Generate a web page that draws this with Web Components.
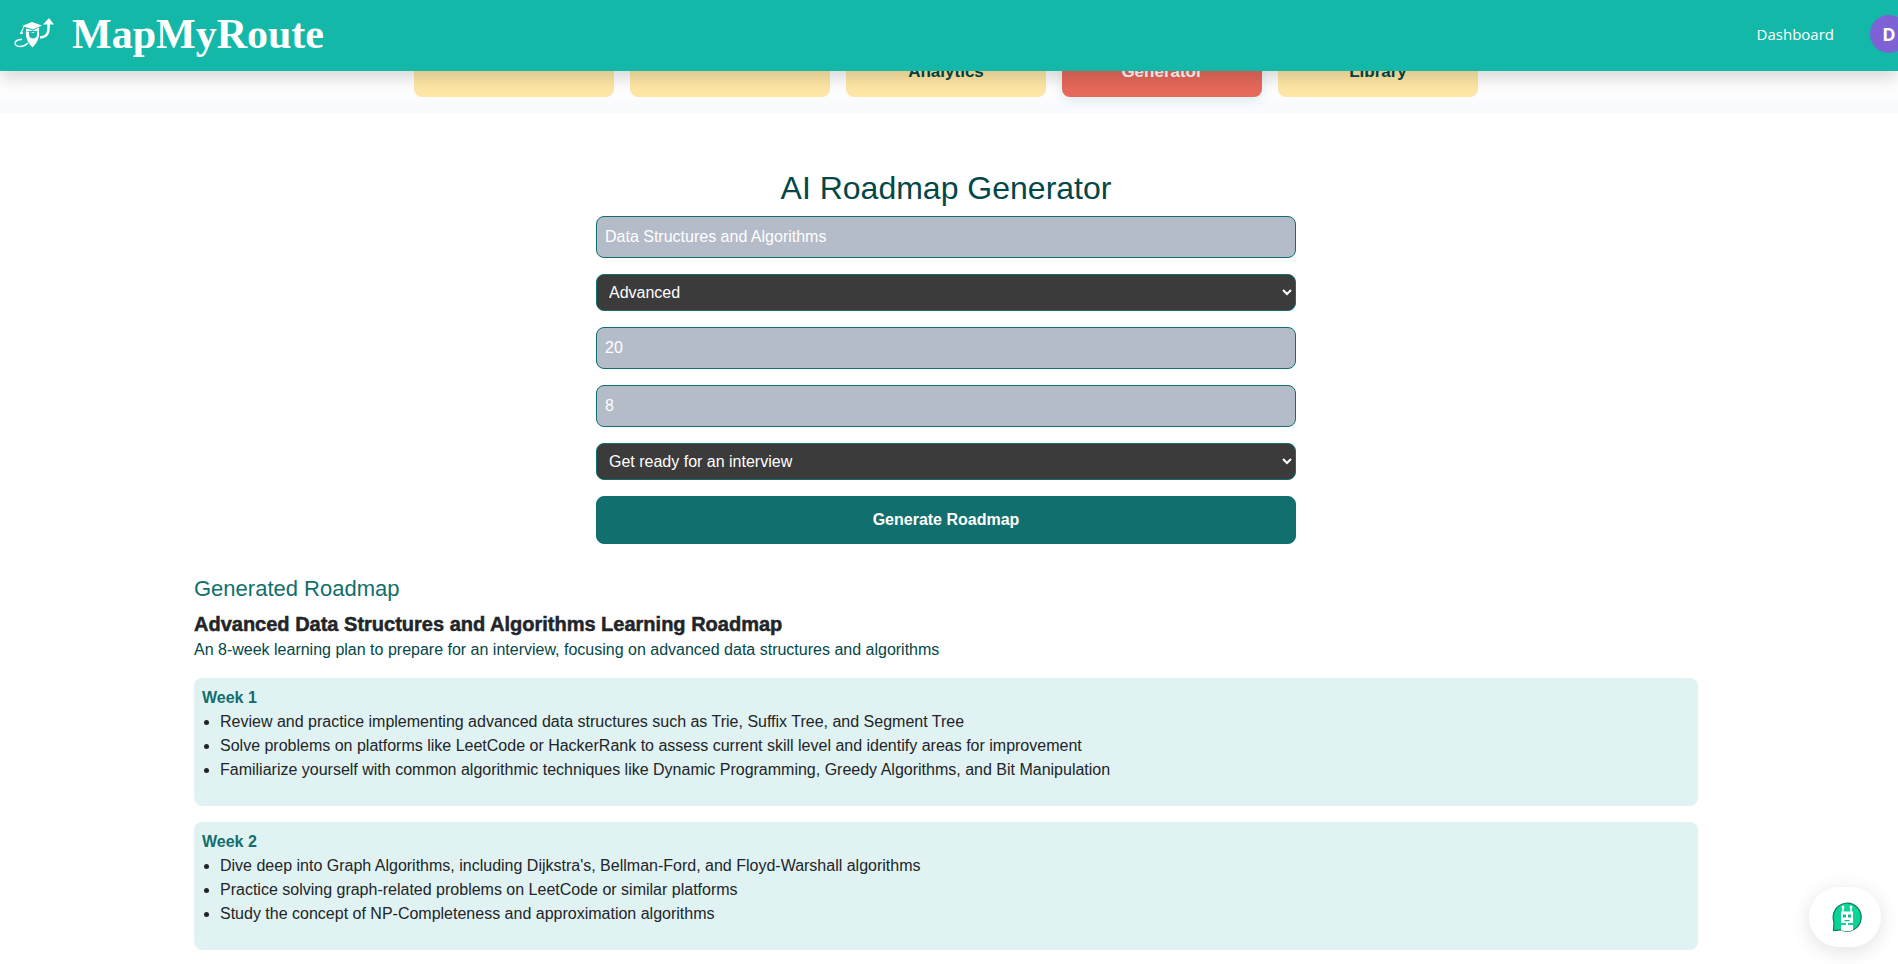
<!DOCTYPE html>
<html lang="en">
<head>
<meta charset="utf-8">
<title>MapMyRoute</title>
<style>
  body { margin: 0; background: #fff; color: #212529; font: 16px/24px "Liberation Sans", Arial, sans-serif; }
</style>
</head>
<body>
<route-app></route-app>

<template id="app">
  <style>
    :host { display: block; overflow-x: clip; }
    .content { padding-right: 6px; }
  </style>
  <site-header></site-header>
  <div class="content">
    <tab-bar>
      <tab-item></tab-item>
      <tab-item></tab-item>
      <tab-item>Analytics</tab-item>
      <tab-item active>Generator</tab-item>
      <tab-item>Library</tab-item>
    </tab-bar>
    <main>
      <roadmap-form></roadmap-form>
      <roadmap-result></roadmap-result>
    </main>
  </div>
  <chat-button></chat-button>
</template>

<template id="header">
  <style>
    :host { display: block; position: sticky; top: 0; z-index: 2; background: #14b8a8; box-shadow: 0 8px 16px rgba(0,0,0,.15); }
    header { display: flex; align-items: center; box-sizing: border-box; height: 71px; padding: 0 0 4px 12px; }
    .brand { display: flex; align-items: center; gap: 16px; color: #fff; text-decoration: none; font: bold 42px/48px "Liberation Serif", "Times New Roman", serif; }
    svg { display: block; width: 44px; height: 40px; }
    nav { display: flex; align-items: center; gap: 36px; margin-left: auto; margin-right: -10px; }
    nav a { color: #fff; text-decoration: none; font: 15px/24px "Open Sans", "Segoe UI", sans-serif; }
    .avatar { width: 38px; height: 38px; padding: 0; border: 0; border-radius: 50%; background: #7e61d4; color: #fff; font: bold 18px/38px "Open Sans", "Segoe UI", sans-serif; }
  </style>
  <header>
    <a class="brand" href="#">
      <svg viewBox="0 0 44 40" fill="none" aria-hidden="true">
        <path d="M10 12L20 8L30 11.500L21 15.500Z" fill="#fff"/>
        <path d="M14 14.500V18Q21 15.500 27 18V13.500L21 16.500Z" fill="#fff"/>
        <path d="M12 12.500L10 17" stroke="#fff" stroke-width="1"/>
        <path d="M10 16L7.500 20L11 20Z" fill="#fff"/>
        <path d="M14 18C13 24 17 30 20.500 33.500C24 30 28 24 27 18Z" fill="#fff"/>
        <path d="M17 18Q19 17.500 21 19Q23 17.500 25 18Q26 24 21 24.500Q16 24 17 18Z" fill="#14b8a8"/>
        <path d="M10 25.500C2 25 1 32 7 32.500Q12 33 16 29" stroke="#fff" stroke-width="1.500"/>
        <path d="M28 23.500C36 23 37 18 36.500 9" stroke="#fff" stroke-width="2.500"/>
        <path d="M31 10.500L37 4L42 10.500Z" fill="#fff"/>
      </svg>
      <span>MapMyRoute</span>
    </a>
    <nav aria-label="Main">
      <a href="#">Dashboard</a>
      <button class="avatar" type="button" aria-label="Account">D</button>
    </nav>
  </header>
</template>

<template id="tabbar">
  <style>
    :host { display: block; background: linear-gradient(#fff 60%, #fafbff 90%); margin: -24px -6px 0 0; padding: 0 6px 16px 0; }
    nav { display: flex; justify-content: center; gap: 16px; }
  </style>
  <nav aria-label="Sections"><slot></slot></nav>
</template>

<template id="tabitem">
  <style>
    :host { display: block; width: 200px; }
    button { display: flex; align-items: flex-end; justify-content: center; width: 100%; height: 50px; padding: 0 8px 13px; border: 0; border-radius: 8px; background: #ffe8a6; color: #034748; font: bold 17px/24px "Liberation Sans", Arial, sans-serif; }
    :host([active]) button { background: #e76a5b; color: #fff; box-shadow: 0 4px 12px rgba(16,112,110,.12); }
  </style>
  <button type="button"><slot></slot></button>
</template>

<template id="form">
  <style>
    :host { display: block; padding-top: 56px; }
    h1 { margin: 0 0 8px; text-align: center; color: #034748; font-size: 32px; line-height: 39px; font-weight: 400; }
    form { display: flex; flex-direction: column; gap: 16px; max-width: 700px; margin: 0 auto; }
    input, select, button { box-sizing: border-box; width: 100%; border: 1px solid #116f6d; border-radius: 8px; color: #fff; font: 16px/24px "Liberation Sans", Arial, sans-serif; }
    input { height: 42px; padding: 8px; background: #b4bbc9; }
    select { height: 37px; padding: 0 8px; background-color: #3b3b3b; }
    button { height: 48px; background: #116f6d; font-weight: 700; }
  </style>
  <h1>AI Roadmap Generator</h1>
  <form>
    <input type="text" aria-label="Topic" value="Data Structures and Algorithms">
    <select aria-label="Skill level"><option>Advanced</option></select>
    <input type="text" inputmode="numeric" aria-label="Hours per week" value="20">
    <input type="text" inputmode="numeric" aria-label="Number of weeks" value="8">
    <select aria-label="Goal"><option>Get ready for an interview</option></select>
    <button type="button">Generate Roadmap</button>
  </form>
</template>

<template id="result">
  <style>
    :host { display: block; max-width: 1504px; margin: 0 auto; padding: 32px 0 14px; }
    h2 { margin: 0 0 8px; color: #116f6d; font-size: 22px; line-height: 26px; font-weight: 400; }
    h3 { margin: 0; font-size: 20px; line-height: 28px; font-weight: 700; -webkit-text-stroke: 0.5px #212529; }
    p { margin: 0 0 16px; color: #034748; }
    .weeks { display: grid; gap: 16px; }
  </style>
  <h2>Generated Roadmap</h2>
  <h3>Advanced Data Structures and Algorithms Learning Roadmap</h3>
  <p>An 8-week learning plan to prepare for an interview, focusing on advanced data structures and algorithms</p>
  <div class="weeks">
    <week-card>
      <span slot="title">Week 1</span>
      <ul>
        <li>Review and practice implementing advanced data structures such as Trie, Suffix Tree, and Segment Tree</li>
        <li>Solve problems on platforms like LeetCode or HackerRank to assess current skill level and identify areas for improvement</li>
        <li>Familiarize yourself with common algorithmic techniques like Dynamic Programming, Greedy Algorithms, and Bit Manipulation</li>
      </ul>
    </week-card>
    <week-card>
      <span slot="title">Week 2</span>
      <ul>
        <li>Dive deep into Graph Algorithms, including Dijkstra's, Bellman-Ford, and Floyd-Warshall algorithms</li>
        <li>Practice solving graph-related problems on LeetCode or similar platforms</li>
        <li>Study the concept of NP-Completeness and approximation algorithms</li>
      </ul>
    </week-card>
  </div>
</template>

<template id="week">
  <style>
    :host { display: block; padding: 8px; border-radius: 8px; background: #e0f2f1; }
    h4 { margin: 0; color: #116f6d; font-size: 16px; line-height: 24px; }
    ::slotted(ul) { margin: 0 0 16px; padding-left: 18px; }
  </style>
  <h4><slot name="title"></slot></h4>
  <slot></slot>
</template>

<template id="chat">
  <style>
    :host { display: block; position: fixed; right: 17px; bottom: 17px; z-index: 3; }
    button { display: flex; align-items: center; justify-content: center; width: 72px; height: 60px; padding: 0 0 0 4px; border: 0; border-radius: 30px; background: #fff; box-shadow: 0 4px 20px rgba(0,0,0,.12); }
    svg { display: block; width: 30px; height: 30px; }
  </style>
  <button type="button" aria-label="Open chat assistant">
    <svg viewBox="0 0 30 30" aria-hidden="true">
      <path d="M1.500 28.500L2 20A14 14 0 1 1 9 27.800Z" fill="#0bd497" stroke="#0c7a5a" stroke-width="1.200"/>
      <path d="M11 5V10M19 5V10" stroke="#fff" stroke-width="1.500"/>
      <circle cx="11" cy="5" r="1.500" fill="#fff"/><circle cx="19" cy="5" r="1.500" fill="#fff"/>
      <path d="M9 9.500H21V21H9ZM14 21H16V23H14ZM9 23H21V28Q15 30.500 9 28Z" fill="#fff"/>
      <path d="M11 12.500H14V15.500H11ZM16 12.500H19V15.500H16ZM12.500 18H17.500V19.200H12.500Z" fill="#0bbf8b"/>
    </svg>
  </button>
</template>

<script>
  const define = (name, templateId) => {
    customElements.define(name, class extends HTMLElement {
      constructor() {
        super();
        const template = document.getElementById(templateId);
        this.attachShadow({ mode: "open" }).append(template.content.cloneNode(true));
      }
    });
  };
  define("site-header", "header");
  define("tab-bar", "tabbar");
  define("tab-item", "tabitem");
  define("roadmap-form", "form");
  define("week-card", "week");
  define("roadmap-result", "result");
  define("chat-button", "chat");
  define("route-app", "app");
</script>
</body>
</html>
